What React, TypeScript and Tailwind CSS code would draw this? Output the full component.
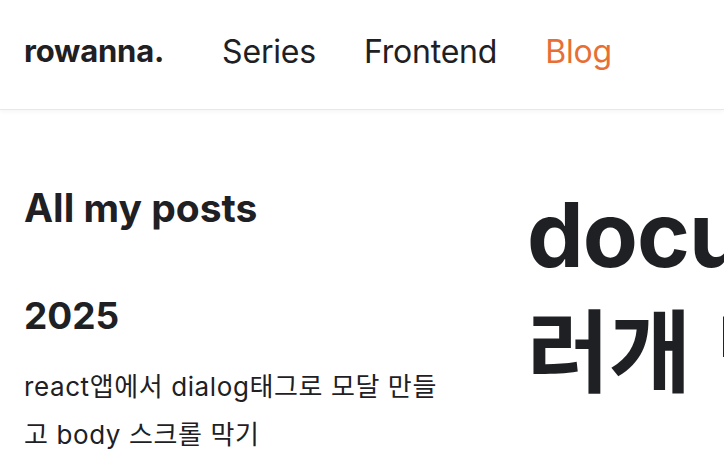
import React from 'react';

const navItems = [
    { label: 'Series', active: false },
    { label: 'Frontend', active: false },
    { label: 'Blog', active: true },
];

const font = { fontFamily: 'Inter, "Noto Sans CJK KR", sans-serif' };

export default function App() {
    return (
        <div className="w-[724px] h-[456px] overflow-hidden bg-white text-[#1f2024]" style={font}>
            {/* Header */}
            <header className="h-[110px] flex items-center px-6 pb-[6px] border-b border-[#e8e8e8] shadow-[0_2px_4px_rgba(0,0,0,0.04)]">
                <a className="text-[31px] font-bold tracking-[-0.2px]">rowanna.</a>
                <nav className="flex items-center gap-[48px] ml-[58px]">
                    {navItems.map(item => (
                        <a
                            key={item.label}
                            className={`text-[32px] font-normal tracking-[-0.2px] ${item.active ? 'text-[#e76f35]' : 'text-[#1f2024]'}`}
                        >
                            {item.label}
                        </a>
                    ))}
                </nav>
            </header>

            {/* Content */}
            <main className="flex px-6">
                <aside className="w-[420px] shrink-0 pt-[74px]">
                    <h2 className="text-[39px] font-bold leading-tight">All my posts</h2>
                    <h3 className="mt-[60px] text-[37px] font-bold leading-tight">2025</h3>
                    <p className="mt-[24px] text-[26px] leading-[48px] tracking-[0.6px]">
                        react앱에서 dialog태그로 모달 만들고 body 스크롤 막기
                    </p>
                </aside>
                <article className="ml-[83px] pt-[66px]">
                    <h1 className="text-[90px] font-bold leading-[118px] whitespace-nowrap tracking-[-1px]">
                        document
                        <br />
                        러개 <span className="ml-[6px]">만들기</span>
                    </h1>
                </article>
            </main>
        </div>
    );
}
